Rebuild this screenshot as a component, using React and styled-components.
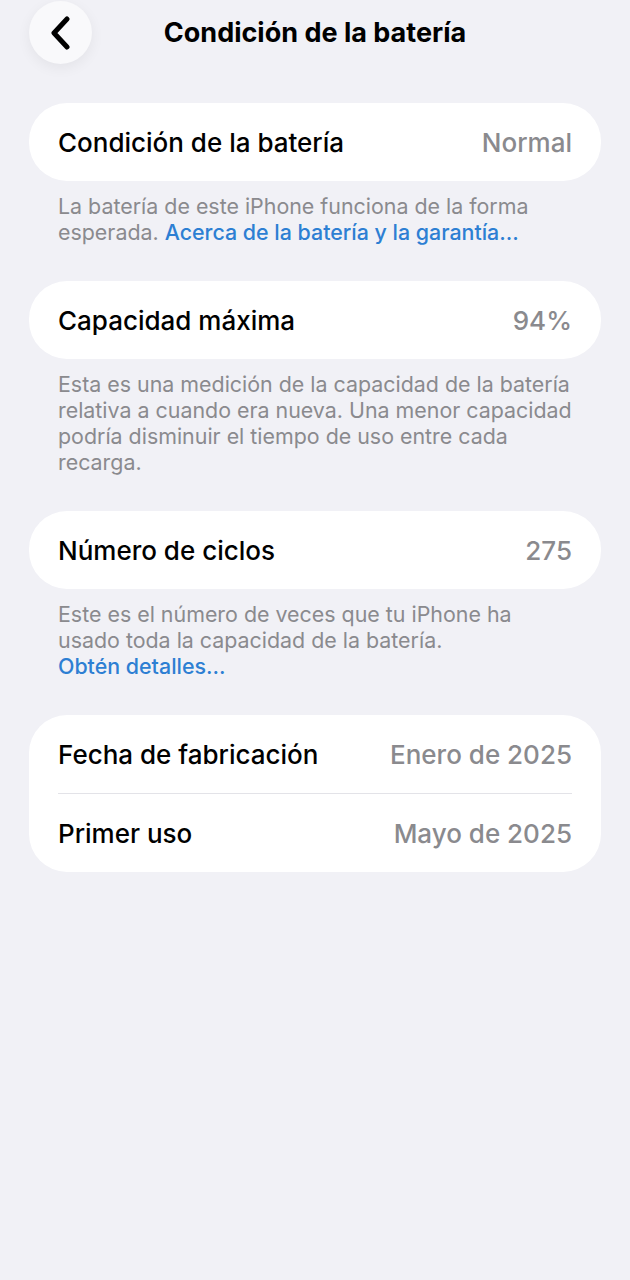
import React from 'react';
import styled, { createGlobalStyle } from 'styled-components';

const GlobalStyle = createGlobalStyle`
  html, body {
    margin: 0;
    padding: 0;
    background: #f1f1f6;
  }
  body {
    font-family: Inter, "Liberation Sans", sans-serif;
    -webkit-font-smoothing: antialiased;
  }
`;

const Screen = styled.div`
  width: 630px;
  min-height: 1280px;
  background: #f1f1f6;
  box-sizing: border-box;
  padding: 0 29px;
`;

const NavBar = styled.div`
  height: 64px;
  display: grid;
  grid-template-columns: 64px 1fr 64px;
  align-items: center;
`;

const BackButton = styled.button`
  width: 63px;
  height: 63px;
  border-radius: 50%;
  border: none;
  background: #f9f9fb;
  box-shadow: 0 4px 14px rgba(0, 0, 0, 0.06);
  display: flex;
  align-items: center;
  justify-content: center;
  padding: 0;
  margin-top: 1px;
`;

const Title = styled.h1`
  margin: 0;
  text-align: center;
  font-size: 27px;
  font-weight: 700;
  letter-spacing: 0;
  color: #000;
  white-space: nowrap;
`;

const Sections = styled.div`
  padding-top: 39px;
  display: flex;
  flex-direction: column;
`;

const Section = styled.section`
  margin-bottom: ${p => p.$gap || 36}px;
`;

const Card = styled.div`
  background: #fff;
  border-radius: 38px;
  padding: 0 29px;
`;

const Row = styled.div`
  height: 78px;
  display: flex;
  align-items: center;
  justify-content: space-between;
  border-top: ${p => (p.$divided ? '1px solid #e3e3e8' : 'none')};
`;

const Label = styled.span`
  font-size: 26px;
  font-weight: 500;
  color: #000;
`;

const Value = styled.span`
  font-size: 26px;
  font-weight: 500;
  color: #8a8a8e;
`;

const Footer = styled.p`
  margin: 0;
  padding: 12px 29px 0;
  font-size: 21.4px;
  line-height: 26px;
  color: #8a8a8e;
  white-space: pre-line;
`;

const Link = styled.span`
  color: #2d7fd3;
  font-weight: 500;
`;

const Chevron = () => (
  <svg width="22" height="34" viewBox="0 0 22 34">
    <path
      d="M17 3 L4 17 L17 31"
      fill="none"
      stroke="#000"
      strokeWidth="5"
      strokeLinecap="round"
      strokeLinejoin="round"
    />
  </svg>
);

export default function App() {
  return (
    <>
      <GlobalStyle />
      <Screen>
        <NavBar>
          <BackButton aria-label="Atrás">
            <Chevron />
          </BackButton>
          <Title>Condición de la batería</Title>
        </NavBar>

        <Sections>
          <Section>
            <Card>
              <Row>
                <Label>Condición de la batería</Label>
                <Value>Normal</Value>
              </Row>
            </Card>
            <Footer>
              {'La batería de este iPhone funciona de la forma\nesperada. '}
              <Link>Acerca de la batería y la garantía...</Link>
            </Footer>
          </Section>

          <Section>
            <Card>
              <Row>
                <Label>Capacidad máxima</Label>
                <Value>94%</Value>
              </Row>
            </Card>
            <Footer>
              {'Esta es una medición de la capacidad de la batería\nrelativa a cuando era nueva. Una menor capacidad\npodría disminuir el tiempo de uso entre cada\nrecarga.'}
            </Footer>
          </Section>

          <Section>
            <Card>
              <Row>
                <Label>Número de ciclos</Label>
                <Value>275</Value>
              </Row>
            </Card>
            <Footer>
              {'Este es el número de veces que tu iPhone ha\nusado toda la capacidad de la batería.\n'}
              <Link>Obtén detalles...</Link>
            </Footer>
          </Section>

          <Section>
            <Card>
              <Row>
                <Label>Fecha de fabricación</Label>
                <Value>Enero de 2025</Value>
              </Row>
              <Row $divided>
                <Label>Primer uso</Label>
                <Value>Mayo de 2025</Value>
              </Row>
            </Card>
          </Section>
        </Sections>
      </Screen>
    </>
  );
}
